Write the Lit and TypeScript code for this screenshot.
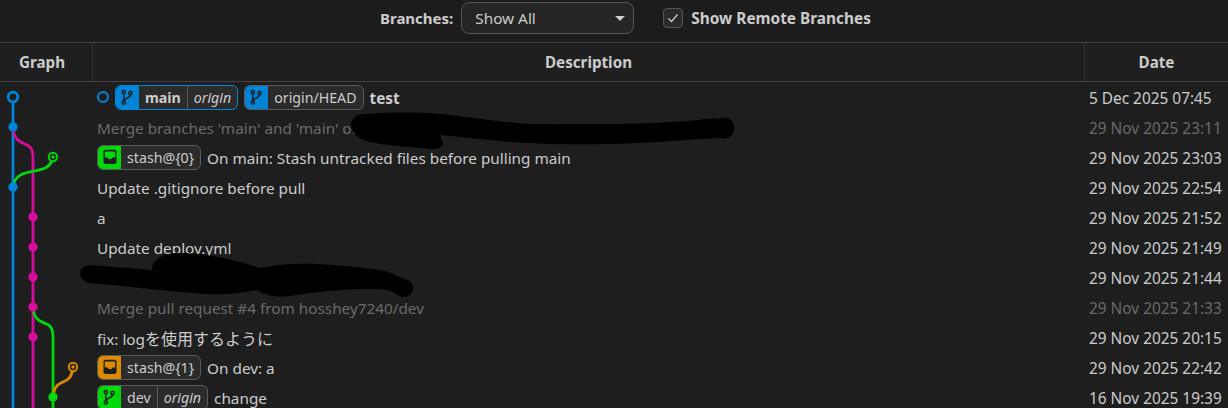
import { LitElement, html, css, svg } from 'lit';
import { customElement } from 'lit/decorators.js';

const BLUE = '#0085d9';
const PINK = '#d60c9a';
const GREEN = '#00d80b';
const ORANGE = '#dc8a00';

type Ref = { name: string; remote?: string; color: string; kind: 'branch' | 'stash'; head?: boolean };
type Row = { refs?: Ref[]; text?: unknown; bold?: boolean; dim?: boolean; date: string; dateDim?: boolean; current?: boolean };

const rows: Row[] = [
  { current: true, bold: true, text: 'test', date: '5 Dec 2025 07:45', refs: [
    { name: 'main', remote: 'origin', color: BLUE, kind: 'branch', head: true },
    { name: 'origin/HEAD', color: BLUE, kind: 'branch' },
  ] },
  { dim: true, text: "Merge branches 'main' and 'main' of", date: '29 Nov 2025 23:11', dateDim: true },
  { text: 'On main: Stash untracked files before pulling main', date: '29 Nov 2025 23:03', refs: [
    { name: 'stash@{0}', color: GREEN, kind: 'stash' },
  ] },
  { text: 'Update .gitignore before pull', date: '29 Nov 2025 22:54' },
  { text: 'a', date: '29 Nov 2025 21:52' },
  { text: 'Update deploy.yml', date: '29 Nov 2025 21:49' },
  { text: '', date: '29 Nov 2025 21:44' },
  { dim: true, text: 'Merge pull request #4 from hosshey7240/dev', date: '29 Nov 2025 21:33', dateDim: true },
  { text: html`fix: log<span class="cjk">を使用するように</span>`, date: '29 Nov 2025 20:15' },
  { text: 'On dev: a', date: '29 Nov 2025 22:42', refs: [
    { name: 'stash@{1}', color: ORANGE, kind: 'stash' },
  ] },
  { text: 'change', date: '16 Nov 2025 19:39', refs: [
    { name: 'dev', remote: 'origin', color: GREEN, kind: 'branch' },
  ] },
];

const branchIcon = html`<svg width="16" height="16" viewBox="0 0 16 16" fill="none" stroke="#1e1e1e" stroke-width="1.5">
  <circle cx="3.800" cy="3" r="1.600"></circle>
  <circle cx="3.800" cy="13.500" r="1.600"></circle>
  <circle cx="10.500" cy="4.200" r="1.600"></circle>
  <path d="M3.800 4.500v7.500M10.500 5.800c0 3.600-6.700 3.200-6.700 6.200"></path>
</svg>`;

const stashIcon = html`<svg width="16" height="16" viewBox="0 0 16 16">
  <path fill="#1e1e1e" d="M3 .8h10l1.500 1.500v11.200l-1.500 1.500h-10l-1.500-1.500v-11.200z"></path>
  <path fill="currentColor" d="M3.300 2.500h9.400l.5.500v5.500h-2.700l-.8 1.500h-3.400l-.8-1.500h-2.700v-5.500z"></path>
</svg>`;

@customElement('app-root')
export class AppRoot extends LitElement {
  static styles = css`
    :host {
      display: block;
      height: 408px;
      overflow: hidden;
      background: #1e1e1e;
      color: #cccccc;
      font-family: 'Noto Sans', 'Noto Sans CJK JP', sans-serif;
      font-size: 15.3px;
    }
    .controls {
      height: 43px;
      box-sizing: border-box;
      padding: 0 0 6px 380px;
      display: flex;
      align-items: center;
      background: #1c1c1c;
      border-bottom: 1px solid #414141;
    }
    .label {
      font-weight: 700;
      font-size: 15px;
    }
    .label.wide {
      font-size: 15.4px;
    }
    .select {
      width: 173px;
      height: 32px;
      box-sizing: border-box;
      margin-left: 8px;
      padding: 0 8px 0 13px;
      display: flex;
      align-items: center;
      justify-content: space-between;
      background: #252525;
      border: 1px solid #555;
      border-radius: 8px;
    }
    .caret {
      width: 0;
      height: 0;
      border: 5px solid transparent;
      border-top: 5px solid #ccc;
      border-bottom: 0;
    }
    .check {
      width: 20px;
      height: 20px;
      box-sizing: border-box;
      margin: 0 8px 0 29px;
      display: flex;
      align-items: center;
      justify-content: center;
      background: #2a2a2a;
      border: 1px solid #555;
      border-radius: 4px;
    }
    .table {
      position: relative;
    }
    .grid-row {
      display: grid;
      grid-template-columns: 92px 1fr 144px;
    }
    .head {
      height: 39px;
      box-sizing: border-box;
      border-bottom: 1px solid #414141;
      font-weight: 700;
      font-size: 15.2px;
      background: #1f1f1f;
    }
    .head > div {
      display: flex;
      align-items: center;
      justify-content: center;
    }
    .head > div:first-child {
      padding-right: 8px;
    }
    .head > div + div {
      border-left: 1px solid #333;
    }
    .row {
      height: 30px;
    }
    .desc {
      display: flex;
      align-items: center;
      padding-left: 5px;
      white-space: nowrap;
      min-width: 0;
    }
    .msg {
      padding-top: 2px;
    }
    .date {
      display: flex;
      align-items: center;
      padding: 2px 0 0 5px;
      box-sizing: border-box;
      white-space: nowrap;
      font-size: 15.4px;
    }
    .dim {
      color: #6a6a6a;
    }
    .bold {
      font-weight: 700;
    }
    .cjk {
      font-size: 16px;
    }
    .dot {
      width: 12px;
      height: 12px;
      box-sizing: border-box;
      border: 2px solid #0085d9;
      border-radius: 50%;
      margin-right: 6px;
    }
    .ref {
      height: 25px;
      box-sizing: border-box;
      display: flex;
      margin-right: 6px;
      font-size: 14.2px;
      background: #2b2b2b;
      border: 1px solid #5a5a5a;
      border-radius: 6px;
      overflow: hidden;
    }
    .ref.head-ref {
      border-color: #0085d9;
    }
    .ref-icon {
      width: 23px;
      display: flex;
      align-items: center;
      justify-content: center;
    }
    .ref-name {
      padding: 0 6px;
      display: flex;
      align-items: center;
    }
    .ref-remote {
      padding: 0 6px;
      display: flex;
      align-items: center;
      font-style: italic;
      border-left: 1px solid #5a5a5a;
    }
    .graph {
      position: absolute;
      left: 0;
      top: 39px;
      pointer-events: none;
    }
    .blot {
      position: absolute;
      left: 0;
      top: -43px;
      pointer-events: none;
    }
  `;

  private renderGraph() {
    const y = (i: number) => 15 + i * 30;
    return html`<svg class="graph" width="92" height="330" fill="none" stroke-width="2.8">
      ${svg`
        <path stroke=${BLUE} d="M13 ${y(0)}V330"></path>
        <path stroke=${PINK} d="M13 ${y(1)}C15 ${y(1) + 24} 33 ${y(1) + 10} 33 ${y(1) + 30}V330"></path>
        <path stroke=${GREEN} d="M53 ${y(2)}C50 ${y(2) + 22} 16 ${y(2) + 6} 13 ${y(3)}"></path>
        <path stroke=${GREEN} d="M33 ${y(7)}C35 ${y(7) + 24} 53 ${y(7) + 8} 53 ${y(7) + 30}V330"></path>
        <path stroke=${ORANGE} d="M73 ${y(9)}C71 ${y(9) + 22} 55 ${y(9) + 8} 53 ${y(10)}"></path>
        <circle cx="13" cy=${y(0)} r="4.800" fill="#1e1e1e" stroke=${BLUE}></circle>
        <circle cx="13" cy=${y(1)} r="4.700" fill=${BLUE} stroke="none"></circle>
        <circle cx="13" cy=${y(3)} r="4.700" fill=${BLUE} stroke="none"></circle>
        <circle cx="53" cy=${y(2)} r="4.200" fill="#1e1e1e" stroke=${GREEN} stroke-width="2"></circle>
        <circle cx="53" cy=${y(2)} r="1.800" fill=${GREEN} stroke="none"></circle>
        ${[4, 5, 6, 7, 8].map((i) => svg`<circle cx="33" cy=${y(i)} r="4.700" fill=${PINK} stroke="none"></circle>`)}
        <circle cx="73" cy=${y(9)} r="4.200" fill="#1e1e1e" stroke=${ORANGE} stroke-width="2"></circle>
        <circle cx="73" cy=${y(9)} r="1.800" fill=${ORANGE} stroke="none"></circle>
        <circle cx="53" cy=${y(10)} r="4.700" fill=${GREEN} stroke="none"></circle>
      `}
    </svg>`;
  }

  private renderRef(r: Ref) {
    return html`<div class="ref ${r.head ? 'head-ref' : ''}">
      <div class="ref-icon" style="background:${r.color};color:${r.color}">${r.kind === 'branch' ? branchIcon : stashIcon}</div>
      <div class="ref-name ${r.head ? 'bold' : ''}">${r.name}</div>
      ${r.remote ? html`<div class="ref-remote">${r.remote}</div>` : ''}
    </div>`;
  }

  render() {
    return html`
      <div class="controls">
        <span class="label">Branches:</span>
        <div class="select"><span>Show All</span><span class="caret"></span></div>
        <div class="check">
          <svg width="14" height="14" viewBox="0 0 14 14" fill="none" stroke="#ccc" stroke-width="1.300"><path d="M2.500 7.500l3 3 6-7"></path></svg>
        </div>
        <span class="label wide">Show Remote Branches</span>
      </div>
      <div class="table">
        <div class="grid-row head">
          <div>Graph</div>
          <div>Description</div>
          <div>Date</div>
        </div>
        ${rows.map((r) => html`<div class="grid-row row">
          <div></div>
          <div class="desc ${r.dim ? 'dim' : ''}">
            ${r.current ? html`<span class="dot"></span>` : ''}
            ${(r.refs ?? []).map((x) => this.renderRef(x))}
            <span class="msg ${r.bold ? 'bold' : ''}">${r.text}</span>
          </div>
          <div class="date ${r.dateDim ? 'dim' : ''}">${r.date}</div>
        </div>`)}
        ${this.renderGraph()}
        <svg class="blot" width="1228" height="408" fill="#000" stroke="none">
          <path d="M358 115C380 112 420 112 440 114C480 118 510 124 540 124C600 125 670 124 717 118L723 138C700 138 670 142 640 143C600 145 540 145 500 141C480 139 460 137 440 135L443 143C442 148 436 150 430 149C410 147 380 145 366 141C352 137 345 122 358 115Z"></path>
          <circle cx="724" cy="128" r="10.500"></circle>
          <path d="M90 265L152 270C151 262 160 254 175 253C205 252 235 260 260 268C290 261 330 263 380 270C390 272 398 276 408 281L403 297C397 295 392 291 387 290C360 287 320 291 290 296C275 298 265 295 257 290C240 293 225 295 205 294C165 291 125 286 90 283C76 280 78 266 90 265Z"></path>
          <circle cx="404" cy="288" r="9"></circle>
        </svg>
      </div>
    `;
  }
}
